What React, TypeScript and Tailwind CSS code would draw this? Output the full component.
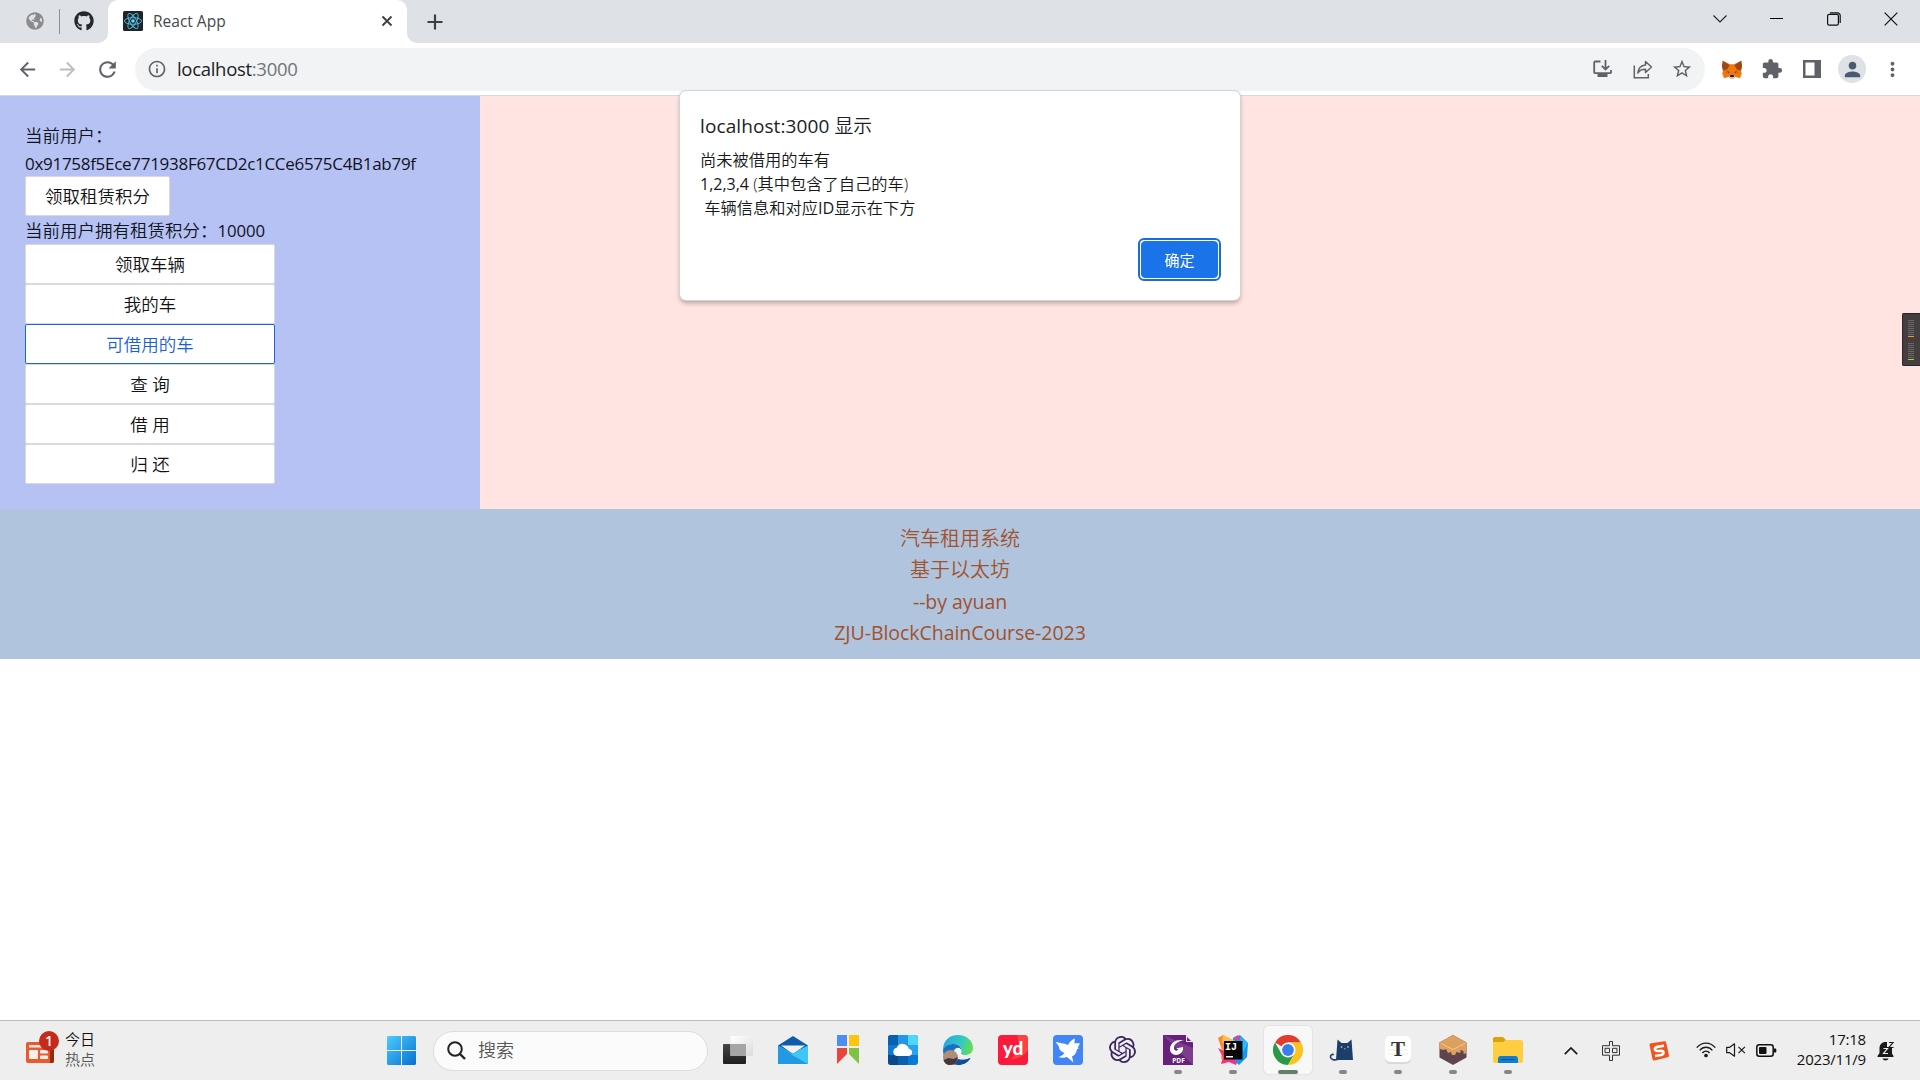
import React from "react";
import { FaGithub, FaGlobeAmericas } from "react-icons/fa";
import { SiOpenai } from "react-icons/si";
import { MdExtension, MdPerson, MdStarBorder, MdInfoOutline, MdMoreVert, MdRefresh, MdArrowBack, MdArrowForward } from "react-icons/md";

const LATIN = "font-['Open_Sans','Noto_Sans_CJK_SC',sans-serif]";

function Cell({ children, className = "w-10" }: { children: React.ReactNode; className?: string }) {
  return <div className={`flex h-full shrink-0 items-center justify-center ${className}`}>{children}</div>;
}

function ReactFavicon() {
  return (
    <svg width="20" height="20" viewBox="0 0 20 20">
      <rect width="20" height="20" rx="1.5" fill="#20232a" />
      <g fill="none" stroke="#53c1de" strokeWidth="0.9">
        <ellipse cx="10" cy="10" rx="8.6" ry="3.3" />
        <ellipse cx="10" cy="10" rx="8.6" ry="3.3" transform="rotate(60 10 10)" />
        <ellipse cx="10" cy="10" rx="8.6" ry="3.3" transform="rotate(120 10 10)" />
      </g>
      <circle cx="10" cy="10" r="1.8" fill="#61dafb" />
    </svg>
  );
}

function TabStrip() {
  return (
    <div className="flex h-[43px] items-start bg-[#dee1e6]">
      <div className="flex h-[42px] w-[98px] items-center pl-[26px]">
        <FaGlobeAmericas size={18} color="#8b8b8b" />
        <div className="ml-[15px] h-[25px] w-px bg-[#8f9194]" />
        <FaGithub size={20} color="#24292f" className="ml-[14px]" />
      </div>
      <div className="flex h-[43px]">
        <div className="flex w-[10px] items-end bg-white">
          <div className="h-full w-full rounded-br-[10px] bg-[#dee1e6]" />
        </div>
        <div className="flex w-[299px] bg-[#dee1e6]">
          <div className="flex w-full items-center rounded-t-[10px] bg-white pr-[13px] pl-[15px]">
            <div className="-mt-[2px]"><ReactFavicon /></div>
            <div className="ml-[10px] flex-1 pt-px text-[15.5px] text-[#45484c]">React App</div>
            <svg width="14" height="14" viewBox="0 0 14 14" className="-mt-[2px]" stroke="#3c4043" strokeWidth="1.9">
              <path d="M2.5 2.5l9 9M11.5 2.5l-9 9" />
            </svg>
          </div>
        </div>
        <div className="w-[10px] bg-white">
          <div className="h-full w-full rounded-bl-[10px] bg-[#dee1e6]" />
        </div>
      </div>
      <svg width="16" height="16" viewBox="0 0 16 16" className="mt-[13.5px] ml-[10px]" stroke="#3c4043" strokeWidth="2.2">
        <path d="M8 .5v15M.5 8h15" />
      </svg>
      <div className="ml-auto flex h-[37px]">
        <Cell className="w-[57px]">
          <svg width="14" height="8" viewBox="0 0 14 8" fill="none" stroke="#222" strokeWidth="1.1"><path d="M.5.5L7 7 13.5.5" /></svg>
        </Cell>
        <Cell className="w-[57px]"><div className="h-px w-[13px] bg-black" /></Cell>
        <Cell className="w-[57px]">
          <svg width="14" height="14" viewBox="0 0 14 14" fill="none" stroke="#111" strokeWidth="1.2">
            <rect x=".6" y="2.4" width="10.8" height="10.8" rx="1.6" />
            <path d="M3 .8h7.4a2.8 2.8 0 0 1 2.8 2.8V11" />
          </svg>
        </Cell>
        <Cell className="w-[58px]">
          <svg width="14" height="14" viewBox="0 0 14 14" stroke="#111" strokeWidth="1.2"><path d="M.7.7l12.6 12.6M13.3.7L.7 13.3" /></svg>
        </Cell>
      </div>
    </div>
  );
}

function Fox() {
  return (
    <svg width="20" height="19" viewBox="0 0 20 19">
      <path d="M.8.8L8 4.2h4L19.2.8l.8 5.4-1 4.8.8 2.6-1.8 4.6-4.4-1.2-2 1.4H8.400l-2-1.400L2 18.200.200 13.600l.8-2.600-1-4.800z" fill="#f0790f" />
      <path d="M.8.800L7.600 5.200 5 9.400 1 10.600 0 6.200zM19.200.800L12.400 5.200 15 9.400l4 1.200 1-4.400z" fill="#9b4718" />
      <path d="M5 9.400l3 3.800-3 .6L2.500 13zM15 9.400l-3 3.800 3 .6 2.500-.8z" fill="#dd6a10" />
      <path d="M6.400 16.500l2-1h3.200l2 1-2 2H8.400z" fill="#d8c1b0" />
      <path d="M5.400 11.500l2 .5-.4 1zM14.600 11.500l-2 .5.4 1z" fill="#233447" />
      <path d="M8.400 15h3.200l.3 1.900H8.100z" fill="#161616" />
    </svg>
  );
}

function Toolbar() {
  return (
    <div className="flex h-[53px] items-center border-b border-[#d6d9dc] bg-white pl-[7px]">
      <Cell><MdArrowBack size={23} color="#5f6368" /></Cell>
      <Cell><MdArrowForward size={23} color="#bcbec1" /></Cell>
      <Cell><MdRefresh size={25} color="#5f6368" /></Cell>
      <div className="ml-[8px] flex h-[43px] w-[1570px] items-center rounded-full bg-[#f1f3f4] pr-[3px] pl-3">
        <MdInfoOutline size={20} color="#5f6368" />
        <div className="ml-[10px] flex-1 text-[18.5px] tracking-[-0.3px] text-[#202124]">
          localhost<span className="text-[#70757a]">:3000</span>
        </div>
        <Cell>
          <svg width="19" height="18" viewBox="0 0 19 18" fill="none" stroke="#5f6368" strokeWidth="1.8">
            <path d="M7.500 1.500H2.200a1 1 0 0 0-1 1v9.700a1 1 0 0 0 1 1H17a1 1 0 0 0 1-1V10" />
            <path d="M12.500 0v9M8.800 5.800l3.700 3.700 3.700-3.700" />
            <path d="M4.500 15.500h10" strokeWidth="3" />
          </svg>
        </Cell>
        <Cell>
          <svg width="20" height="19" viewBox="0 0 20 19" className="ml-px" fill="none" stroke="#5f6368" strokeWidth="1.500">
            <path d="M1.300 5.500v12.200h14V14" />
            <path d="M12.500 1.500l6 5.500-6 5.500V9.300c-3.500 0-6 1-7.700 3.700.5-4.500 3-7.600 7.700-8z" strokeLinejoin="round" />
          </svg>
        </Cell>
        <Cell><MdStarBorder size={22} color="#5f6368" /></Cell>
      </div>
      <div className="ml-[7px] flex h-full">
        <Cell><Fox /></Cell>
        <Cell><MdExtension size={22} color="#5f6368" /></Cell>
        <Cell>
          <svg width="18" height="18" viewBox="0 0 18 18"><path fill="#5f6368" fillRule="evenodd" d="M0 0h18v18H0zM2.500 2.500v13h9v-13z" /></svg>
        </Cell>
        <Cell>
          <div className="flex size-7 items-center justify-center rounded-full bg-[#dee1e6]"><MdPerson size={23} color="#4a5a70" /></div>
        </Cell>
        <Cell><MdMoreVert size={23} color="#5f6368" /></Cell>
      </div>
    </div>
  );
}

function MenuButton({ label, active = false, className = "w-[250px]" }: { label: string; active?: boolean; className?: string }) {
  return (
    <div
      className={`flex h-10 items-center justify-center rounded-[2px] border bg-white pt-[2px] text-[17.5px] font-[350] ${className} ${
        active ? "border-[#1b66e0] text-[#1a60de]" : "border-[#d9d9d9] text-[#111]"
      }`}
    >
      {label}
    </div>
  );
}

function Page() {
  return (
    <>
      <div className="flex h-[413px]">
        <div className="w-[480px] bg-[#b6c2f4] p-[25px] text-[17.5px] leading-[27.5px] font-[350] text-[#11131c]">
          <div className="h-[27.5px] pt-px">当前用户：</div>
          <div className="h-[27.5px] pt-px text-[17px] font-normal tracking-[-0.29px] whitespace-nowrap">0x91758f5Ece771938F67CD2c1CCe6575C4B1ab79f</div>
          <MenuButton label="领取租赁积分" className="w-[145px]" />
          <div className="h-[27.5px] pt-px whitespace-nowrap">
            当前用户拥有租赁积分：<span className="text-[16.8px] font-normal tracking-[-0.1px]">10000</span>
          </div>
          <MenuButton label="领取车辆" />
          <MenuButton label="我的车" />
          <MenuButton label="可借用的车" active />
          <MenuButton label="查 询" />
          <MenuButton label="借 用" />
          <MenuButton label="归 还" />
        </div>
        <div className="flex-1 bg-[#ffe4e1]" />
      </div>
      <div className="h-[150px] bg-[#b0c4de] pt-[14px] text-center text-[20px] leading-[31.400px] text-[#a0522d]">
        <div className="font-[350]">汽车租用系统</div>
        <div className="font-[350]">基于以太坊</div>
        <div className="text-[19.5px] tracking-[-0.05px]">--by ayuan</div>
        <div className="text-[19.5px] tracking-[-0.05px]">ZJU-BlockChainCourse-2023</div>
      </div>
    </>
  );
}

function AlertDialog() {
  return (
    <div className="absolute top-[91px] left-[680px] flex h-[209px] w-[560px] flex-col rounded-[6px] bg-white px-5 pt-5 shadow-[0_0_0_1px_#d5d2d2,0_3px_5px_rgba(0,0,0,0.3)]">
      <div className="h-[30px] text-[18.750px] leading-[30px] text-[#202124]">
        <span className="text-[19px] tracking-[0.1px]">localhost:3000 </span>
        <span className="font-[350]">显示</span>
      </div>
      <div className="mt-[7px] text-[16.250px] leading-[24px] font-[350] whitespace-pre text-[#17181a]">
        <div>尚未被借用的车有</div>
        <div><span className="text-[16px] font-normal">1,2,3,4 </span>(其中包含了自己的车)</div>
        <div> 车辆信息和对应<span className="font-normal">ID</span>显示在下方</div>
      </div>
      <div className="mt-[18px] mr-[-1px] flex h-[43px] w-[83px] self-end rounded-[6px] border-2 border-[#1a6be0] bg-white p-px">
        <div className="flex w-full items-center justify-center rounded-[4px] border border-[#1a73e8] bg-[#1a73e8] pt-px text-[15px] text-white">确定</div>
      </div>
    </div>
  );
}

function SideMeter() {
  const bar = (color: string, key: string) => <div key={key} className={`mb-px h-px w-[6px] ${color}`} />;
  const rows = [0, 1, 2, 3, 4, 5, 6, 7];
  return (
    <div className="absolute top-[313px] left-[1902px] h-[53px] w-[18px] rounded-l-[2px] border border-r-0 border-[#2b2627] bg-[#443e40] pt-[6px] pl-[5px]">
      {rows.map((r) => bar("bg-[#6a6567]", `a${r}`))}
      {bar("bg-[#f09a1c]", "a")}
      <div className="h-[5px]" />
      {rows.map((r) => bar("bg-[#6a6567]", `b${r}`))}
      {bar("bg-[#8ee035]", "b")}
    </div>
  );
}

const svg30 = { width: 30, height: 30, viewBox: "0 0 30 30" };

const taskIcons: { icon: React.ReactNode; state?: "open" | "active" }[] = [
  {
    icon: (
      <svg {...svg30}>
        <defs>
          <linearGradient id="tv1" x1="0" y1="0" x2="0" y2="1"><stop offset="0" stopColor="#454545" /><stop offset="1" stopColor="#1e1e1e" /></linearGradient>
          <linearGradient id="tv2" x1="0" y1="0" x2="1" y2="1"><stop offset="0" stopColor="#fff" /><stop offset="1" stopColor="#dcdcdc" /></linearGradient>
        </defs>
        <rect x="0" y="9" width="23" height="20" rx="1" fill="url(#tv1)" />
        <rect x="7.500" y="1" width="22.500" height="20" rx="1" fill="url(#tv2)" />
        <path d="M7.500 9H23v12H7.500z" fill="#a5a5a5" />
      </svg>
    ),
  },
  {
    icon: (
      <svg {...svg30}>
        <path d="M0 10.500L15 1l15 9.500V20H0z" fill="#0d5cab" />
        <path d="M3 10.500h24L15 19z" fill="#f3f1f0" />
        <path d="M0 10.500L15 18.500 30 10.500V29H0z" fill="#33b3ee" />
        <path d="M0 10.500L30 29H0z" fill="#2199e3" />
        <path d="M30 10.500L13 19.500 30 29z" fill="#3dc6f7" />
      </svg>
    ),
  },
  {
    icon: (
      <svg {...svg30}>
        <path d="M4 0h10v11H4z" fill="#4d8df6" /><path d="M16 0h10v11H16z" fill="#fdc50b" />
        <path d="M4 13h10v6L4 29z" fill="#e94540" /><path d="M16 13h10v16L16 19z" fill="#80c342" />
      </svg>
    ),
  },
  {
    icon: (
      <svg {...svg30}>
        <defs><clipPath id="ccl"><rect width="30" height="30" rx="3" /></clipPath></defs>
        <g clipPath="url(#ccl)">
          <path d="M0 0h30v30H0z" fill="#0a78d4" />
          <path d="M0 0h10v10H0z" fill="#0c5fad" /><path d="M10 0h10v10H10z" fill="#2397e6" /><path d="M20 0h10v10H20z" fill="#4dd6fe" />
          <path d="M20 10h10v10H20z" fill="#2aa3ee" /><path d="M0 20h10v10H0z" fill="#0b4a8d" /><path d="M10 20h10v10H10z" fill="#0c5fad" />
        </g>
        <path d="M9 21a4.200 4.200 0 0 1-.3-8.300 6.500 6.500 0 0 1 12.200 1A3.700 3.700 0 0 1 21 21z" fill="#fff" />
      </svg>
    ),
  },
  {
    icon: (
      <svg {...svg30}>
        <defs>
          <linearGradient id="eg1" x1="0" y1=".3" x2="1" y2=".5"><stop offset="0" stopColor="#27a7e0" /><stop offset=".6" stopColor="#35c9c0" /><stop offset="1" stopColor="#62e04c" /></linearGradient>
        </defs>
        <path d="M0 15C0 6 6 0 15 0s15 6 15 13c0 5-4 7-8 7-3 0-5-1-3.500-3C20 13 16 9 11 9 6 9 2 12 0 15z" fill="url(#eg1)" />
        <path d="M0 15c2-4 6-6 11-6 4 0 8 3 7.500 7-2-5-8-3-8 2 0 6 7 9 17 5-3 5-8 7-12.500 7C6 30 0 24 0 15z" fill="#1572c4" />
        <path d="M10.500 18c0 6 7 9 17 5-3 5-8 7-12.500 7-5-2-6-7-4.500-12z" fill="#104f97" />
        <path d="M12 15c1.500-3 5-3 6 0 .5 2-1.500 3.500 1 5-3 1-5 0-7-3z" fill="#eef5fb" />
        <circle cx="7.500" cy="22.500" r="7.500" fill="#b08c7a" />
        <path d="M.5 25l5-2 5 1 4-2c0 5-3 8-7 8-4 0-6-2-7-5z" fill="#43393b" />
      </svg>
    ),
  },
  {
    icon: (
      <svg {...svg30}>
        <rect width="30" height="30" rx="4" fill="#fb1a3b" />
        <path d="M19 0h7a4 4 0 0 1 4 4v11c-3 5-9 9-17 9 8-6 9-14 6-24z" fill="#fb4440" />
        <text x="15" y="19.500" textAnchor="middle" fontFamily="Lato" fontWeight="900" fontSize="19" fill="#fff">yd</text>
      </svg>
    ),
  },
  {
    icon: (
      <svg {...svg30}>
        <rect width="30" height="30" rx="4" fill="#4285f7" />
        <path d="M2.500 7c4 1 8 1 12.500 3 1.500-3 4-5.500 7-6.500-.8 2 0 3.500-.5 5 2-.5 3.500-1 5.500 0-1 2-1.500 3-2.500 4l2 .5-2.500 1c-.5 4-2.500 6.500-5 7.500l1.500 6-6.500-5.500c-2.500 1-6 1-8.500 0 3-1 5-2.500 6-4C7 16 6 14 6 11.500z" fill="#fff" />
      </svg>
    ),
  },
  { icon: <SiOpenai size={27} color="#3b2560" /> },
  {
    state: "open",
    icon: (
      <svg {...svg30}>
        <path d="M0 0h22.500L30 7.500V30H0z" fill="#68217a" />
        <path d="M0 0l30 30V13z" fill="#7c3d8c" />
        <path d="M23.500 1v5.500H29z" fill="#68217a" stroke="#fff" strokeWidth=".9" />
        <path d="M21 5.500c-7-2-13 1.500-14 7.500-.8 5 4 8 8.500 6.500 3-1 5-4 4.500-7.500l-7 1.500 2.500 1c-1 2-4.500 1.500-4.500-1.500C11 9 15 6 21 5.500z" fill="#fff" />
        <text x="15.500" y="27.500" textAnchor="middle" fontFamily="Open Sans" fontWeight="700" fontSize="6.500" fill="#fff">PDF</text>
      </svg>
    ),
  },
  {
    state: "open",
    icon: (
      <svg {...svg30}>
        <path d="M0 3l5-3 12 6-5 16-9 2 1-9z" fill="#fc8a35" />
        <path d="M0 13l6 3 14 9-2 5-7-3-8 2 2-7z" fill="#fb2f77" />
        <path d="M15 3l7-3 8 8-1 14-8 8-6-6z" fill="#1496f3" />
        <path d="M5 0l12 6-6 4-7-3z" fill="#fdc04b" /><path d="M15 3l5-3 3 6z" fill="#f43a8d" />
        <path d="M22 2l8 6-5 9z" fill="#28bdf8" />
        <rect x="6" y="6" width="18.500" height="18.500" fill="#0b0708" />
        <text x="7" y="15" fontFamily="Liberation Mono" fontWeight="700" fontSize="10" fill="#fff">IJ</text>
        <path d="M8 21h7v1.500H8z" fill="#fff" />
      </svg>
    ),
  },
  {
    state: "active",
    icon: (
      <svg {...svg30}>
        <path d="M15 15L2 7.500A15 15 0 0 1 28 7.500H15z" fill="#e33b2e" />
        <path d="M15 15l-6.500 3.750L2 7.500A15 15 0 0 0 15 30l6.500-11.250z" fill="#2a9a48" />
        <path d="M15 7.500h13A15 15 0 0 1 15 30l6.500-11.250z" fill="#fcc31e" />
        <circle cx="15" cy="15" r="7.500" fill="#fff" /><circle cx="15" cy="15" r="5.900" fill="#3a7dee" />
      </svg>
    ),
  },
  {
    state: "open",
    icon: (
      <svg {...svg30}>
        <path d="M9.500 4.500l4 3.500h6l4-3.500L25 25H8z" fill="#1d3e6b" />
        <path d="M10 24.200c-3.500 1.500-7 .5-7.500-2-.4-2 1.500-3.500 3.300-2.500" fill="none" stroke="#1d3e6b" strokeWidth="1.600" />
        <circle cx="13.500" cy="12" r=".8" fill="#dce7f5" /><circle cx="20" cy="12" r=".8" fill="#dce7f5" />
        <path d="M15.800 13.500h2l-1 1z" fill="#dce7f5" />
      </svg>
    ),
  },
  {
    state: "open",
    icon: (
      <svg {...svg30}>
        <rect x="2" y="2" width="26" height="27" rx="5" fill="#d9d9d9" /><rect x="2" y="1" width="26" height="26" rx="5" fill="#fefefe" />
        <path d="M5 11h20M5 15h20M5 19h20" stroke="#ececec" />
        <text x="15" y="21" textAnchor="middle" fontFamily="Liberation Serif" fontWeight="700" fontSize="21" fill="#333">T</text>
      </svg>
    ),
  },
  {
    state: "open",
    icon: (
      <svg {...svg30}>
        <path d="M15 0l13.500 7.500v15L15 30 1.500 22.500v-15z" fill="#5e454b" />
        <path d="M15 0l13.500 7.500V18l-3 1v-3l-3-1v3l-4-1-1.500 3h-3l-1-3-3 1-2-4-2 1-4.500-1V7.500z" fill="#dea05e" />
        <path d="M3 8.500l12 6 12-6" fill="none" stroke="#f1c891" />
      </svg>
    ),
  },
  {
    state: "open",
    icon: (
      <svg {...svg30}>
        <path d="M0 4a2 2 0 0 1 2-2h8l3 3-3 4H0z" fill="#dda10b" />
        <path d="M0 7h10l3-2h15a2 2 0 0 1 2 2v19a2 2 0 0 1-2 2H2a2 2 0 0 1-2-2z" fill="#fecd40" />
        <path d="M5 28v-4a3 3 0 0 1 3-3h14a3 3 0 0 1 3 3v4z" fill="#0f7dd0" />
        <path d="M8.500 24.500h13" stroke="#0a5296" />
      </svg>
    ),
  },
];

function Taskbar() {
  return (
    <div className="mt-auto flex h-[60px] items-center border-t border-[#bcbcbc] bg-[#eeeeee]">
      <div className="flex w-[387px] items-center pb-[4px] pl-[26px]">
        <svg width="34" height="34" viewBox="0 0 34 34" className="-mt-[4px]">
          <rect x="0" y="12" width="28" height="21" rx="2" fill="#ea5a30" />
          <path d="M24 15h4v16a2 2 0 0 1-2 2h-2z" fill="#96290f" />
          <path d="M3 15h16v2.500H3z" fill="#fce7df" />
          <rect x="3" y="20" width="9" height="9" rx="1" fill="#fdf0ea" />
          <rect x="14" y="20" width="8" height="3.500" rx="1" fill="#fdf0ea" /><rect x="14" y="25.500" width="8" height="3.500" rx="1" fill="#fdf0ea" />
          <circle cx="23" cy="11" r="10" fill="#c42b1c" />
          <text x="23" y="16" textAnchor="middle" fontFamily="Open Sans" fontSize="14" fontWeight="600" fill="#fff">1</text>
        </svg>
        <div className="ml-[5px] text-[15px] leading-[20px] font-[350]">
          <div className="text-[#111]">今日</div>
          <div className="text-[#555]">热点</div>
        </div>
      </div>
      <svg width="29" height="29" viewBox="0 0 29 29">
        <defs>
          <linearGradient id="win" x1="0" y1="0" x2="1" y2="1" gradientUnits="objectBoundingBox"><stop offset="0" stopColor="#4dcbfd" /><stop offset="1" stopColor="#0670d0" /></linearGradient>
        </defs>
        <path d="M1 0h13v14H0V1zM15 0h13l1 1v13H15zM0 15h14v14H1l-1-1zM15 15h14v13l-1 1H15z" fill="url(#win)" />
      </svg>
      <div className="ml-[17px] flex h-[40px] w-[275px] items-center rounded-full border border-[#dcdcdc] bg-[#fbfbfb] pl-[13px]">
        <svg width="19" height="19" viewBox="0 0 19 19" fill="none" stroke="#222" strokeWidth="2"><circle cx="8" cy="8" r="6.800" /><path d="M13 13l5 5" strokeWidth="2.400" /></svg>
        <span className="ml-[12px] text-[18px] font-[350] text-[#555]">搜索</span>
      </div>
      <div className="ml-[2px] flex h-full">
        {taskIcons.map(({ icon, state }, i) => (
          <div key={i} className="flex w-[55px] shrink-0 items-center justify-center pb-px">
            <div
              className={`relative flex h-[48px] w-[48px] items-center justify-center rounded-[5px] pb-px ${
                state === "active" ? "bg-[#f8f8f8] shadow-[0_0_0_1px_#e4e4e4]" : ""
              }`}
            >
              <div className="flex size-[30px] items-center justify-center">{icon}</div>
              {state === "open" && <div className="absolute bottom-0 left-[20px] h-1 w-2 rounded-full bg-[#868686]" />}
              {state === "active" && <div className="absolute bottom-0 left-[14px] h-1 w-5 rounded-full bg-[#647f69]" />}
            </div>
          </div>
        ))}
      </div>
      <svg width="14" height="8" viewBox="0 0 14 8" className="ml-[29px]" fill="none" stroke="#1a1a1a" strokeWidth="1.700"><path d="M.8 7.200L7 1l6.200 6.200" /></svg>
      <svg width="18" height="20" viewBox="0 0 18 20" className="ml-[24px]" fill="none" stroke="#333" strokeWidth="1">
        <path d="M7.500.5h3v4.200h7v9.500h-7v5.300h-3v-5.300h-7V4.700h7z" /><path d="M3 7.300h4.500v4.300H3zM10.500 7.300H15v4.300h-4.500z" />
      </svg>
      <svg width="21" height="20" viewBox="0 0 21 20" className="ml-[29px]">
        <path d="M.5 4Q.3 2.500 2 2.200L15.500.2q1.500-.2 1.700 1.300L20 14.500q.2 1.500-1.300 1.800L5.500 19.500Q3.800 19.800 3.500 18z" fill="#f2541b" />
        <path d="M15 4.800l-5.500.8c-5 .8-4.500 4.600-.5 4.400l3-.2c3.500 0 3.200 3.500 0 4.200l-6 1" fill="none" stroke="#fff" strokeWidth="2.600" />
      </svg>
      <svg width="20" height="16" viewBox="0 0 20 16" className="ml-[26px] -mt-px" fill="none" stroke="#1a1a1a" strokeWidth="1.300">
        <path d="M.7 5.600C6-.5 14-.5 19.300 5.600" /><path d="M3.600 8.400c3.600-4.200 9.200-4.200 12.800 0" /><path d="M6.400 11c2-2.500 5.200-2.500 7.200 0" /><circle cx="10" cy="13.500" r="1.200" fill="#1a1a1a" />
      </svg>
      <svg width="20" height="14" viewBox="0 0 20 14" className="ml-[10px] -mt-px" fill="none" stroke="#1a1a1a" strokeWidth="1.200">
        <path d="M.7 4.300h3L8.500.8v12.400L3.700 9.700h-3z" strokeLinejoin="round" /><path d="M12.500 3.800l6.400 6.400M18.900 3.800l-6.400 6.400" />
      </svg>
      <svg width="21" height="13" viewBox="0 0 21 13" className="ml-[10px] -mt-px">
        <rect x=".8" y=".8" width="16.400" height="11.400" rx="2.500" fill="none" stroke="#111" strokeWidth="1.500" />
        <rect x="3" y="3" width="7.500" height="7" rx="1" fill="#111" /><path d="M18 4.500h1.500a.8.8 0 0 1 .8.8v2.400a.8.8 0 0 1-.8.8H18z" fill="#111" />
      </svg>
      <div className="w-[89px] pb-[3px] text-right text-[15px] leading-[20px] tracking-[-0.200px] whitespace-nowrap text-[#111]">
        <div>17:18</div>
        <div>2023/11/9</div>
      </div>
      <svg width="18" height="20" viewBox="0 0 18 20" className="ml-[11px]">
        <path d="M2.500 12V7.500c0-4 2.500-6.500 6-6.500H10v5h5v6.500l1.500 2.500v1H.5v-1zM5.500 17.500h6c-.5 2.500-5.500 2.500-6 0z" fill="#1a1a1a" />
        <path d="M6.500 7.500h4l-4 5h4.500" fill="none" stroke="#eee" strokeWidth="1.200" /><path d="M12 1.500h4l-4 5h4.500" fill="none" stroke="#1a1a1a" strokeWidth="1.200" />
      </svg>
    </div>
  );
}

export default function App() {
  return (
    <div className={`relative flex h-[1080px] w-[1920px] flex-col overflow-hidden bg-white ${LATIN}`}>
      <TabStrip />
      <Toolbar />
      <Page />
      <Taskbar />
      <AlertDialog />
      <SideMeter />
    </div>
  );
}
